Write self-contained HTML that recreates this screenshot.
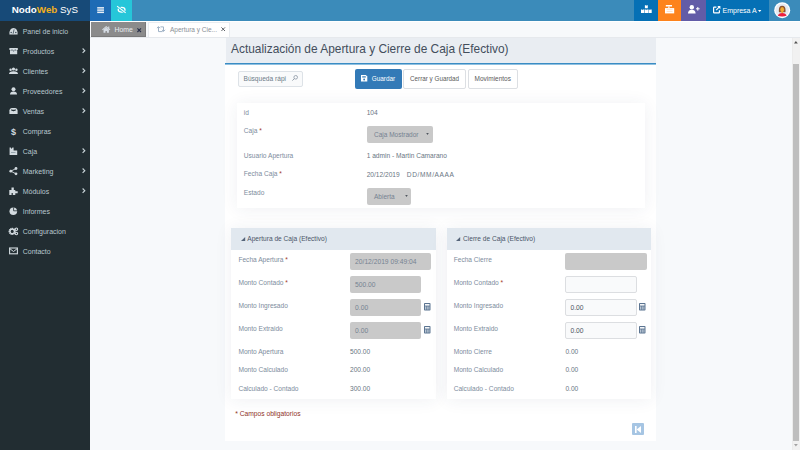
<!DOCTYPE html>
<html><head><meta charset="utf-8"><style>
*{box-sizing:border-box;margin:0;padding:0}
html,body{width:800px;height:450px;overflow:hidden}
body{position:relative;background:#f7f9fb;font-family:"Liberation Sans",sans-serif;color:#555}
.a{position:absolute}
.t{position:absolute;white-space:nowrap;line-height:1}
svg{overflow:visible}
</style></head><body>
<div class="a" style="left:0.00px;top:0.00px;width:800.00px;height:21.00px;background:#3b8bba"></div>
<div class="a" style="left:0.00px;top:0.00px;width:90.00px;height:21.00px;background:#174a78"></div>
<div class="t" style="left:11.80px;top:5.20px;font-size:9.8px;color:#fff;"><b>Nodo</b><b style="color:#f2b01e">Web</b> SyS</div>
<div class="a" style="left:90.00px;top:0.00px;width:21.00px;height:21.00px;background:#1e6bb5"></div>
<div class="a" style="left:111.00px;top:0.00px;width:21.00px;height:21.00px;background:#26c6d9"></div>
<svg class="a" style="left:97px;top:7px" width="7.2" height="6.2" viewBox="0 0 7.2 6.2"><rect x="0.2" y="0.1" width="6.8" height="1.5" fill="#e8eef6"/><rect x="0.2" y="2.35" width="6.8" height="1.5" fill="#e8eef6"/><rect x="0.2" y="4.6" width="6.8" height="1.5" fill="#e8eef6"/></svg>
<svg class="a" style="left:113px;top:3px" width="16" height="14" viewBox="0 0 16 14"><ellipse cx="8.6" cy="6.8" rx="3.4" ry="2.4" fill="none" stroke="#fff" stroke-width="1.3"/><circle cx="8.6" cy="6.8" r="1" fill="#fff"/><path d="M4.1 3.1 L12.7 9.9" stroke="#26c6d9" stroke-width="2.2"/><path d="M4.1 3.1 L12.7 9.9" stroke="#fff" stroke-width="1.1"/></svg>
<div class="a" style="left:634.00px;top:0.00px;width:24.00px;height:21.00px;background:#0570b5"></div>
<div class="a" style="left:658.00px;top:0.00px;width:23.00px;height:21.00px;background:#fd831c"></div>
<div class="a" style="left:681.00px;top:0.00px;width:25.00px;height:21.00px;background:#625ca7"></div>
<div class="a" style="left:706.00px;top:0.00px;width:63.00px;height:21.00px;background:#0570b5"></div>
<svg class="a" style="left:641px;top:5px" width="11" height="9" viewBox="0 0 11 9"><path d="M3.9 0.2 H5 L5.3 0.9 L5.6 0.2 H6.8 V3.3 H3.9Z" fill="#fff"/><path d="M0 4.6 H1.1 L1.5 5.3 L1.9 4.6 H3.3 V7.9 H0Z" fill="#fff"/><path d="M3.7 4.6 H4.8 L5.2 5.3 L5.6 4.6 H7 V7.9 H3.7Z" fill="#fff"/><path d="M7.4 4.6 H8.5 L8.9 5.3 L9.3 4.6 H10.7 V7.9 H7.4Z" fill="#fff"/></svg>
<svg class="a" style="left:665px;top:5px" width="10" height="9" viewBox="0 0 10 9"><rect x="0.8" y="0" width="6.2" height="1.5" fill="#fff"/><rect x="3.3" y="1.5" width="1.2" height="1.6" fill="#fff"/><rect x="0" y="3.1" width="9.2" height="5.3" fill="#fff"/><rect x="1.6" y="4.4" width="6" height="0.7" fill="#fdd4b0"/><rect x="1.6" y="6" width="6" height="0.7" fill="#fdd4b0"/></svg>
<svg class="a" style="left:688px;top:5px" width="12" height="9" viewBox="0 0 12 9"><circle cx="3.8" cy="2.2" r="2.2" fill="#fff"/><path d="M0 8.6 Q0 4.8 3.8 4.8 Q7.6 4.8 7.6 8.6Z" fill="#fff"/><rect x="8" y="3.3" width="3.6" height="1" fill="#fff"/><rect x="9.3" y="2" width="1" height="3.6" fill="#fff"/></svg>
<svg class="a" style="left:713px;top:6px" width="8" height="8" viewBox="0 0 8 8"><path d="M3.4 1.1 H1.2 Q0.6 1.1 0.6 1.7 V6.3 Q0.6 6.9 1.2 6.9 H5.8 Q6.4 6.9 6.4 6.3 V4.2" stroke="#fff" stroke-width="1.2" fill="none"/><path d="M3.2 4.1 L6.6 0.7" stroke="#fff" stroke-width="1.2"/><path d="M4.3 0.1 H7.4 V3.2Z" fill="#fff"/></svg>
<div class="t" style="left:722.50px;top:6.97px;font-size:7.0px;color:#fff;">Empresa A</div>
<svg class="a" style="left:758px;top:9.5px" width="4" height="3" viewBox="0 0 4 3"><path d="M0 0 H3.4 L1.7 2Z" fill="#fff"/></svg>
<svg class="a" style="left:774px;top:2.3px" width="16.4" height="16.4" viewBox="0 0 16.4 16.4"><circle cx="8.2" cy="8.2" r="8" fill="#fff"/><circle cx="8.2" cy="8.2" r="6.8" fill="#e6eaf1"/><path d="M4.8 9 Q4.6 3.7 8.2 3.7 Q11.8 3.7 11.6 9 L11.4 10.2 L5 10.2Z" fill="#8b5330"/><ellipse cx="8.2" cy="7.6" rx="1.9" ry="2.5" fill="#f0ad32"/><rect x="7.4" y="9.5" width="1.6" height="1.6" fill="#f0ad32"/><path d="M3.8 13.8 Q4.4 10.9 8.2 10.9 Q12 10.9 12.6 13.8 Q8.2 15.4 3.8 13.8Z" fill="#ec1f3e"/></svg>
<div class="a" style="left:0.00px;top:21.00px;width:90.00px;height:429.00px;background:#222d32"></div>
<div class="t" style="left:22.70px;top:28.07px;font-size:7.0px;color:#b8c7ce;">Panel de inicio</div>
<svg class="a" style="left:9.3px;top:27.1px" width="9" height="8" viewBox="0 0 9 8"><path d="M0.4 7.4 Q0.2 0.9 4.5 0.9 Q8.8 0.9 8.6 7.4Z" fill="#d3dbe0"/><circle cx="2.2" cy="5.4" r="0.75" fill="#3a4a55"/><circle cx="6.8" cy="5.4" r="0.75" fill="#3a4a55"/><path d="M4.1 6.8 L5.1 2.4" stroke="#3a4a55" stroke-width="0.8"/></svg>
<div class="t" style="left:22.70px;top:48.07px;font-size:7.0px;color:#b8c7ce;">Productos</div>
<svg class="a" style="left:81.5px;top:47.9px" width="4" height="5.4" viewBox="0 0 4 5.4"><path d="M0.6 0.5 L2.8 2.7 L0.6 4.9" stroke="#c8d3d8" stroke-width="1.15" fill="none"/></svg>
<svg class="a" style="left:9.3px;top:47.1px" width="9" height="8" viewBox="0 0 9 8"><rect x="0.4" y="1" width="8.4" height="2" fill="#d3dbe0"/><rect x="1" y="3.2" width="7.2" height="4" fill="#d3dbe0"/><circle cx="3" cy="2.9" r="0.6" fill="#52626d"/><circle cx="6.2" cy="2.9" r="0.6" fill="#52626d"/><circle cx="4.6" cy="4" r="0.6" fill="#52626d"/></svg>
<div class="t" style="left:22.70px;top:68.07px;font-size:7.0px;color:#b8c7ce;">Clientes</div>
<svg class="a" style="left:81.5px;top:67.9px" width="4" height="5.4" viewBox="0 0 4 5.4"><path d="M0.6 0.5 L2.8 2.7 L0.6 4.9" stroke="#c8d3d8" stroke-width="1.15" fill="none"/></svg>
<svg class="a" style="left:9.3px;top:67.1px" width="9" height="8" viewBox="0 0 9 8"><circle cx="4.5" cy="2" r="1.6" fill="#d3dbe0"/><circle cx="1.6" cy="2.8" r="1.2" fill="#d3dbe0"/><circle cx="7.4" cy="2.8" r="1.2" fill="#d3dbe0"/><path d="M0 7 Q0 4.2 4.5 4.2 Q9 4.2 9 7Z" fill="#d3dbe0"/></svg>
<div class="t" style="left:22.70px;top:88.07px;font-size:7.0px;color:#b8c7ce;">Proveedores</div>
<svg class="a" style="left:81.5px;top:87.9px" width="4" height="5.4" viewBox="0 0 4 5.4"><path d="M0.6 0.5 L2.8 2.7 L0.6 4.9" stroke="#c8d3d8" stroke-width="1.15" fill="none"/></svg>
<svg class="a" style="left:9.3px;top:87.1px" width="9" height="8" viewBox="0 0 9 8"><circle cx="4.5" cy="2.2" r="2" fill="#d3dbe0"/><path d="M1 7.6 Q1 4.6 4.5 4.6 Q8 4.6 8 7.6Z" fill="#d3dbe0"/></svg>
<div class="t" style="left:22.70px;top:108.07px;font-size:7.0px;color:#b8c7ce;">Ventas</div>
<svg class="a" style="left:81.5px;top:107.9px" width="4" height="5.4" viewBox="0 0 4 5.4"><path d="M0.6 0.5 L2.8 2.7 L0.6 4.9" stroke="#c8d3d8" stroke-width="1.15" fill="none"/></svg>
<svg class="a" style="left:9.3px;top:107.1px" width="9" height="8" viewBox="0 0 9 8"><path d="M0.4 7 V3.6 Q0.6 1 2.6 1 H6.4 Q8.4 1 8.6 3.6 V7Z" fill="#d3dbe0"/><path d="M2.2 2.9 Q4.5 4.9 6.8 2.9 Q4.5 3.3 2.2 2.9Z" fill="#222d32" stroke="#222d32" stroke-width="0.6"/></svg>
<div class="t" style="left:22.70px;top:128.07px;font-size:7.0px;color:#b8c7ce;">Compras</div>
<svg class="a" style="left:9.3px;top:127.1px" width="9" height="8" viewBox="0 0 9 8"><text x="1.9" y="7.6" font-size="9" font-weight="bold" fill="#d3dbe0" font-family="Liberation Sans">$</text></svg>
<div class="t" style="left:22.70px;top:148.07px;font-size:7.0px;color:#b8c7ce;">Caja</div>
<svg class="a" style="left:81.5px;top:147.9px" width="4" height="5.4" viewBox="0 0 4 5.4"><path d="M0.6 0.5 L2.8 2.7 L0.6 4.9" stroke="#c8d3d8" stroke-width="1.15" fill="none"/></svg>
<svg class="a" style="left:9.3px;top:147.1px" width="9" height="8" viewBox="0 0 9 8"><path d="M0.6 0.5 H1.8 L2.6 2 L3.4 0.5 H4.6 V3.4 H8.2 V7.9 H0.6Z" fill="#d3dbe0"/><rect x="2" y="5" width="4.5" height="0.8" fill="#8a9aa3"/></svg>
<div class="t" style="left:22.70px;top:168.07px;font-size:7.0px;color:#b8c7ce;">Marketing</div>
<svg class="a" style="left:81.5px;top:167.9px" width="4" height="5.4" viewBox="0 0 4 5.4"><path d="M0.6 0.5 L2.8 2.7 L0.6 4.9" stroke="#c8d3d8" stroke-width="1.15" fill="none"/></svg>
<svg class="a" style="left:9.3px;top:167.1px" width="9" height="8" viewBox="0 0 9 8"><circle cx="7" cy="1.5" r="1.4" fill="#d3dbe0"/><circle cx="1.8" cy="4.2" r="1.4" fill="#d3dbe0"/><circle cx="7" cy="6.8" r="1.4" fill="#d3dbe0"/><path d="M7 1.5 L1.8 4.2 L7 6.8" stroke="#d3dbe0" stroke-width="0.9" fill="none"/></svg>
<div class="t" style="left:22.70px;top:188.07px;font-size:7.0px;color:#b8c7ce;">Módulos</div>
<svg class="a" style="left:81.5px;top:187.9px" width="4" height="5.4" viewBox="0 0 4 5.4"><path d="M0.6 0.5 L2.8 2.7 L0.6 4.9" stroke="#c8d3d8" stroke-width="1.15" fill="none"/></svg>
<svg class="a" style="left:9.3px;top:187.1px" width="9" height="8" viewBox="0 0 9 8"><path d="M0.3 2.9 H2.5 V0.5 H4.8 V2.9 H6.3 V4.3 H8.7 V6.3 H6.3 V7.9 H3.8 V6 H2.6 V7.9 H0.3Z" fill="#d3dbe0"/></svg>
<div class="t" style="left:22.70px;top:208.07px;font-size:7.0px;color:#b8c7ce;">Informes</div>
<svg class="a" style="left:9.3px;top:207.1px" width="9" height="8" viewBox="0 0 9 8"><circle cx="4.3" cy="4.2" r="3.8" fill="#d3dbe0"/><path d="M4.6 0.5 V3.8 H8.4" stroke="#222d32" stroke-width="0.8" fill="none"/></svg>
<div class="t" style="left:22.70px;top:228.07px;font-size:7.0px;color:#b8c7ce;">Configuracion</div>
<svg class="a" style="left:9.3px;top:227.1px" width="9" height="8" viewBox="0 0 9 8"><circle cx="3.2" cy="4.4" r="2.9" fill="none" stroke="#d3dbe0" stroke-width="1.5" stroke-dasharray="1.1 0.55"/><circle cx="3.2" cy="4.4" r="2.2" fill="none" stroke="#d3dbe0" stroke-width="1.3"/><circle cx="7.4" cy="2.3" r="1.25" fill="none" stroke="#d3dbe0" stroke-width="1.1"/><circle cx="7.4" cy="6.5" r="1.25" fill="none" stroke="#d3dbe0" stroke-width="1.1"/></svg>
<div class="t" style="left:22.70px;top:248.07px;font-size:7.0px;color:#b8c7ce;">Contacto</div>
<svg class="a" style="left:9.3px;top:247.1px" width="9" height="8" viewBox="0 0 9 8"><rect x="0.6" y="1" width="7.8" height="5.8" fill="none" stroke="#d3dbe0" stroke-width="1.1"/><path d="M0.6 1.5 L4.5 4.5 L8.4 1.5" stroke="#d3dbe0" stroke-width="1" fill="none"/></svg>
<div class="a" style="left:90.00px;top:21.00px;width:710.00px;height:17.00px;background:#f7f9fb;border-top:1px solid #fff;border-bottom:1px solid #e6e9ed"></div>
<div class="a" style="left:91.00px;top:22.00px;width:54.50px;height:15.20px;background:#8b8b8b;box-shadow:inset -1px -1px 0 #7a7a7a"></div>
<svg class="a" style="left:102px;top:26px" width="8.4" height="7" viewBox="0 0 8.4 7"><path d="M0.4 3.9 L4.2 0.6 L8 3.9" stroke="#d5dce4" stroke-width="1.1" fill="none"/><rect x="6.2" y="0.5" width="1.1" height="2.3" fill="#d5dce4"/><path d="M1.5 3.6 L4.2 1.4 L6.9 3.6 V6.8 H4.9 V4.9 H3.5 V6.8 H1.5Z" fill="#d5dce4"/></svg>
<div class="t" style="left:114.50px;top:26.66px;font-size:6.9px;color:#e9edf1;">Home</div>
<svg class="a" style="left:137px;top:27.6px" width="4.4" height="4.4" viewBox="0 0 4.4 4.4"><path d="M0.4 0.4 L4 4 M4 0.4 L0.4 4" stroke="#29304a" stroke-width="1.1"/></svg>
<div class="a" style="left:147.50px;top:22.00px;width:82.50px;height:15.40px;background:#fff;border:1px solid #e8ecf0;border-bottom:none"></div>
<svg class="a" style="left:156px;top:26px" width="10" height="6.5" viewBox="0 0 10 6.5"><path d="M0.9 2.2 L2.5 0.6 L4.1 2.2 M2.5 1 V5.6 H6.6 M4.4 0.9 H7.5 V5.2 M5.9 3.8 L7.5 5.4 L9.1 3.8" stroke="#9fb2c6" stroke-width="1" fill="none"/></svg>
<div class="t" style="left:170.00px;top:27.00px;font-size:6.5px;color:#8a8f96;">Apertura y Cie...</div>
<svg class="a" style="left:221.2px;top:27.3px" width="4.4" height="4.4" viewBox="0 0 4.4 4.4"><path d="M0.4 0.4 L4 4 M4 0.4 L0.4 4" stroke="#4a4f56" stroke-width="0.9"/></svg>
<div class="a" style="left:225.50px;top:38.00px;width:430.50px;height:25.00px;background:#e9edf2"></div>
<div class="a" style="left:225.00px;top:63.00px;width:431.00px;height:1.00px;background:#3a8cc4"></div>
<div class="a" style="left:225.00px;top:64.00px;width:431.00px;height:1.00px;background:#8fc0e0"></div>
<div class="a" style="left:225.00px;top:65.00px;width:431.00px;height:375.50px;background:#fff"></div>
<div class="t" style="left:231.00px;top:43.73px;font-size:11.9px;color:#434e5c;">Actualización de Apertura y Cierre de Caja (Efectivo)</div>
<div class="a" style="left:238.00px;top:71.00px;width:64.50px;height:16.00px;background:#f9fafb;border:1px solid #dde2e7;border-radius:2px"></div>
<div class="t" style="left:243.50px;top:75.91px;font-size:6.6px;color:#6d7a88;">Búsqueda rápi</div>
<svg class="a" style="left:292px;top:75px" width="6" height="6" viewBox="0 0 6 6"><circle cx="3.7" cy="2.3" r="1.8" fill="none" stroke="#8a96a3" stroke-width="0.8"/><path d="M2.4 3.6 L0.4 5.6" stroke="#8a96a3" stroke-width="0.9"/></svg>
<div class="a" style="left:354.50px;top:69.30px;width:47.50px;height:19.50px;background:#337ab7;border-radius:2px"></div>
<svg class="a" style="left:360.5px;top:75.2px" width="6.4" height="6.5" viewBox="0 0 6.4 6.5"><path d="M0 0 H4.8 L6.3 1.5 V6.5 H0Z" fill="#fff"/><rect x="1.2" y="1.3" width="3.6" height="1.2" fill="#337ab7"/><circle cx="3.15" cy="4.5" r="0.9" fill="#337ab7"/></svg>
<div class="t" style="left:371.75px;top:76.08px;font-size:6.4px;color:#fff;">Guardar</div>
<div class="a" style="left:403.30px;top:69.30px;width:62.50px;height:19.50px;background:#fff;border:1px solid #dcdfe3;border-radius:2px"></div>
<div class="t" style="left:410.00px;top:76.17px;font-size:6.3px;color:#5a5a5a;">Cerrar y Guardad</div>
<div class="a" style="left:467.50px;top:69.30px;width:50.30px;height:19.50px;background:#fff;border:1px solid #dcdfe3;border-radius:2px"></div>
<div class="t" style="left:474.50px;top:76.00px;font-size:6.5px;color:#5a5a5a;">Movimientos</div>
<div class="a" style="left:236.50px;top:102.70px;width:408.50px;height:105.50px;background:#fff;box-shadow:0 1px 16px rgba(40,60,90,.075)"></div>
<div class="t" style="left:243.80px;top:109.61px;font-size:6.6px;color:#7d8c9d;">id</div>
<div class="t" style="left:366.70px;top:109.61px;font-size:6.6px;color:#6a7683;">104</div>
<div class="t" style="left:243.80px;top:128.41px;font-size:6.6px;color:#7d8c9d;">Caja <span style="color:#a23b2a">*</span></div>
<div class="a" style="left:366.50px;top:125.70px;width:66.20px;height:17.60px;background:#c9c9c9;border-radius:2px"></div>
<div class="t" style="left:374.00px;top:131.70px;font-size:6.5px;color:#758291;">Caja Mostrador</div>
<svg class="a" style="left:426.3px;top:133.3px" width="3" height="2.2" viewBox="0 0 3 2.2"><path d="M0.2 0 H2.8 L1.5 2Z" fill="#50565e"/></svg>
<div class="t" style="left:243.80px;top:152.91px;font-size:6.6px;color:#7d8c9d;">Usuario Apertura</div>
<div class="t" style="left:366.70px;top:152.91px;font-size:6.6px;color:#6a7683;">1 admin - Martin Camarano</div>
<div class="t" style="left:243.80px;top:171.41px;font-size:6.6px;color:#7d8c9d;">Fecha Caja <span style="color:#a23b2a">*</span></div>
<div class="t" style="left:366.70px;top:171.91px;font-size:6.6px;color:#6a7683;">20/12/2019</div>
<div class="t" style="left:406.80px;top:171.91px;font-size:6.6px;color:#6a7683;letter-spacing:0.6px">DD/MM/AAAA</div>
<div class="t" style="left:243.80px;top:190.31px;font-size:6.6px;color:#7d8c9d;">Estado</div>
<div class="a" style="left:366.50px;top:187.50px;width:44.70px;height:17.60px;background:#c9c9c9;border-radius:2px"></div>
<div class="t" style="left:374.00px;top:193.50px;font-size:6.5px;color:#758291;">Abierta</div>
<svg class="a" style="left:404.8px;top:195.2px" width="3" height="2.2" viewBox="0 0 3 2.2"><path d="M0.2 0 H2.8 L1.5 2Z" fill="#50565e"/></svg>
<div class="a" style="left:231.00px;top:228.30px;width:204.50px;height:170.50px;background:#fff;box-shadow:0 1px 16px rgba(40,60,90,.075)"></div>
<div class="a" style="left:231.00px;top:228.30px;width:204.50px;height:21.50px;background:#e1e8ef"></div>
<svg class="a" style="left:240.75px;top:236.9px" width="4.2" height="3.9" viewBox="0 0 4.2 3.9"><path d="M4.2 0 V3.9 H0Z" fill="#56657a"/></svg>
<div class="t" style="left:247.30px;top:236.11px;font-size:6.6px;color:#4a5568;">Apertura de Caja (Efectivo)</div>
<div class="a" style="left:446.70px;top:228.30px;width:204.30px;height:170.50px;background:#fff;box-shadow:0 1px 16px rgba(40,60,90,.075)"></div>
<div class="a" style="left:446.70px;top:228.30px;width:204.30px;height:21.50px;background:#e1e8ef"></div>
<svg class="a" style="left:456.45px;top:236.9px" width="4.2" height="3.9" viewBox="0 0 4.2 3.9"><path d="M4.2 0 V3.9 H0Z" fill="#56657a"/></svg>
<div class="t" style="left:463.00px;top:236.11px;font-size:6.6px;color:#4a5568;">Cierre de Caja (Efectivo)</div>
<div class="t" style="left:238.40px;top:256.61px;font-size:6.6px;color:#7d8c9d;">Fecha Apertura <span style="color:#a23b2a">*</span></div>
<div class="t" style="left:238.40px;top:279.91px;font-size:6.6px;color:#7d8c9d;">Monto Contado <span style="color:#a23b2a">*</span></div>
<div class="t" style="left:238.40px;top:302.61px;font-size:6.6px;color:#7d8c9d;">Monto Ingresado</div>
<div class="t" style="left:238.40px;top:325.51px;font-size:6.6px;color:#7d8c9d;">Monto Extraido</div>
<div class="t" style="left:238.40px;top:348.81px;font-size:6.6px;color:#7d8c9d;">Monto Apertura</div>
<div class="t" style="left:238.40px;top:367.41px;font-size:6.6px;color:#7d8c9d;">Monto Calculado</div>
<div class="t" style="left:238.40px;top:386.31px;font-size:6.6px;color:#7d8c9d;">Calculado - Contado</div>
<div class="a" style="left:350.00px;top:253.20px;width:81.00px;height:16.60px;background:#c9c9c9;border-radius:2px"></div>
<div class="t" style="left:355.10px;top:258.83px;font-size:6.7px;color:#758291;">20/12/2019 09:49:04</div>
<div class="a" style="left:350.00px;top:276.10px;width:70.70px;height:16.70px;background:#c9c9c9;border-radius:2px"></div>
<div class="t" style="left:355.10px;top:281.83px;font-size:6.7px;color:#758291;">500.00</div>
<div class="a" style="left:350.00px;top:299.00px;width:70.70px;height:16.70px;background:#c9c9c9;border-radius:2px"></div>
<div class="t" style="left:355.10px;top:304.83px;font-size:6.7px;color:#758291;">0.00</div>
<div class="a" style="left:350.00px;top:322.00px;width:70.70px;height:16.70px;background:#c9c9c9;border-radius:2px"></div>
<div class="t" style="left:355.10px;top:327.83px;font-size:6.7px;color:#758291;">0.00</div>
<svg class="a" style="left:423.8px;top:302.9px" width="6.5" height="7.5" viewBox="0 0 6.5 7.5"><rect x="0" y="0" width="6.5" height="7.5" rx="0.8" fill="#5b7491"/><rect x="1" y="1" width="4.5" height="1.6" fill="#f4f6f8"/><rect x="1" y="3.4" width="1.1" height="3.2" fill="#b9c6d4"/><rect x="2.7" y="3.4" width="1.1" height="3.2" fill="#b9c6d4"/><rect x="4.4" y="3.4" width="1.1" height="3.2" fill="#b9c6d4"/></svg>
<svg class="a" style="left:423.8px;top:325.9px" width="6.5" height="7.5" viewBox="0 0 6.5 7.5"><rect x="0" y="0" width="6.5" height="7.5" rx="0.8" fill="#5b7491"/><rect x="1" y="1" width="4.5" height="1.6" fill="#f4f6f8"/><rect x="1" y="3.4" width="1.1" height="3.2" fill="#b9c6d4"/><rect x="2.7" y="3.4" width="1.1" height="3.2" fill="#b9c6d4"/><rect x="4.4" y="3.4" width="1.1" height="3.2" fill="#b9c6d4"/></svg>
<div class="t" style="left:350.00px;top:348.81px;font-size:6.6px;color:#6a7683;">500.00</div>
<div class="t" style="left:350.00px;top:367.41px;font-size:6.6px;color:#6a7683;">200.00</div>
<div class="t" style="left:350.00px;top:386.31px;font-size:6.6px;color:#6a7683;">300.00</div>
<div class="t" style="left:453.70px;top:256.61px;font-size:6.6px;color:#7d8c9d;">Fecha Cierre</div>
<div class="t" style="left:453.70px;top:279.91px;font-size:6.6px;color:#7d8c9d;">Monto Contado <span style="color:#a23b2a">*</span></div>
<div class="t" style="left:453.70px;top:302.61px;font-size:6.6px;color:#7d8c9d;">Monto Ingresado</div>
<div class="t" style="left:453.70px;top:325.51px;font-size:6.6px;color:#7d8c9d;">Monto Extraido</div>
<div class="t" style="left:453.70px;top:348.81px;font-size:6.6px;color:#7d8c9d;">Monto Cierre</div>
<div class="t" style="left:453.70px;top:367.41px;font-size:6.6px;color:#7d8c9d;">Monto Calculado</div>
<div class="t" style="left:453.70px;top:386.31px;font-size:6.6px;color:#7d8c9d;">Calculado - Contado</div>
<div class="a" style="left:565.40px;top:253.20px;width:81.40px;height:16.60px;background:#c9c9c9;border-radius:2px"></div>
<div class="a" style="left:565.40px;top:276.10px;width:71.20px;height:16.70px;background:#f9fafb;border:1px solid #dcdee1;border-radius:2px"></div>
<div class="a" style="left:565.40px;top:299.00px;width:71.20px;height:16.70px;background:#f9fafb;border:1px solid #dcdee1;border-radius:2px"></div>
<div class="t" style="left:570.50px;top:304.83px;font-size:6.7px;color:#4d5560;">0.00</div>
<div class="a" style="left:565.40px;top:322.00px;width:71.20px;height:16.70px;background:#f9fafb;border:1px solid #dcdee1;border-radius:2px"></div>
<div class="t" style="left:570.50px;top:327.83px;font-size:6.7px;color:#4d5560;">0.00</div>
<svg class="a" style="left:639.0999999999999px;top:302.9px" width="6.5" height="7.5" viewBox="0 0 6.5 7.5"><rect x="0" y="0" width="6.5" height="7.5" rx="0.8" fill="#5b7491"/><rect x="1" y="1" width="4.5" height="1.6" fill="#f4f6f8"/><rect x="1" y="3.4" width="1.1" height="3.2" fill="#b9c6d4"/><rect x="2.7" y="3.4" width="1.1" height="3.2" fill="#b9c6d4"/><rect x="4.4" y="3.4" width="1.1" height="3.2" fill="#b9c6d4"/></svg>
<svg class="a" style="left:639.0999999999999px;top:325.9px" width="6.5" height="7.5" viewBox="0 0 6.5 7.5"><rect x="0" y="0" width="6.5" height="7.5" rx="0.8" fill="#5b7491"/><rect x="1" y="1" width="4.5" height="1.6" fill="#f4f6f8"/><rect x="1" y="3.4" width="1.1" height="3.2" fill="#b9c6d4"/><rect x="2.7" y="3.4" width="1.1" height="3.2" fill="#b9c6d4"/><rect x="4.4" y="3.4" width="1.1" height="3.2" fill="#b9c6d4"/></svg>
<div class="t" style="left:565.40px;top:348.81px;font-size:6.6px;color:#6a7683;">0.00</div>
<div class="t" style="left:565.40px;top:367.41px;font-size:6.6px;color:#6a7683;">0.00</div>
<div class="t" style="left:565.40px;top:386.31px;font-size:6.6px;color:#6a7683;">0.00</div>
<div class="t" style="left:235.20px;top:410.63px;font-size:6.7px;color:#8e3326;">* Campos obligatorios</div>
<div class="a" style="left:632.00px;top:423.00px;width:12.00px;height:12.30px;background:#a6c5e3;border-radius:1px"></div>
<svg class="a" style="left:635px;top:425.6px" width="6" height="7" viewBox="0 0 6 7"><rect x="0" y="0" width="1.6" height="7" fill="#fff"/><path d="M6 0 V7 L1.6 3.5Z" fill="#fff"/></svg>
<div class="a" style="left:792.00px;top:38.00px;width:8.00px;height:412.00px;background:#f1f1f1;border-left:1px solid #ececec"></div>
<div class="a" style="left:792.80px;top:64.40px;width:6.20px;height:376.60px;background:#bebebe"></div>
<svg class="a" style="left:794px;top:40.6px" width="3.8" height="2.4" viewBox="0 0 3.8 2.4"><path d="M0 2.4 L1.9 0 L3.8 2.4Z" fill="#505050"/></svg>
<svg class="a" style="left:794px;top:444.2px" width="3.8" height="2.4" viewBox="0 0 3.8 2.4"><path d="M0 0 L1.9 2.4 L3.8 0Z" fill="#a3a3a3"/></svg>
</body></html>
